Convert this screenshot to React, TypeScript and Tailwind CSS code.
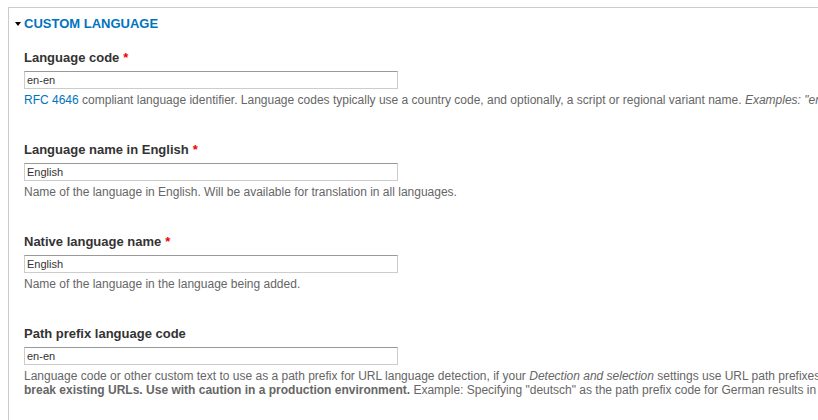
import type { ReactNode } from 'react'

interface FieldProps {
  label: string
  required?: boolean
  value: string
  children: ReactNode
}

function Field({ label, required, value, children }: FieldProps) {
  return (
    <div className="flex flex-col">
      <label className="h-[16px] text-[13px] font-bold leading-[16px] text-[#333]">
        {label}
        {required && <span className="ml-[4px] text-[#e00]">*</span>}
      </label>
      <input
        type="text"
        readOnly
        value={value}
        className="mt-[5px] h-[18px] w-[374px] border border-[#ccc] border-t-[#999] bg-white px-[2px] text-[11px] leading-[14px] text-[#333] outline-none"
      />
      <div className="mt-[4px] whitespace-nowrap text-[12px] leading-[14px] text-[#666]">{children}</div>
    </div>
  )
}

export default function App() {
  return (
    <div className="h-[420px] w-[818px] overflow-hidden bg-white font-['Liberation_Sans',Arial,sans-serif]">
      <div className="ml-[8px] mt-[7px] h-[500px] w-[1200px] border-l border-t border-[#ccc]">
        {/* Summary */}
        <div className="mt-[8px] flex h-[16px] items-center">
          <span className="ml-[6px] mr-[3px] h-0 w-0 border-x-[3.5px] border-t-[4px] border-x-transparent border-t-black" />
          <span className="text-[13px] font-bold uppercase leading-[16px] text-[#0074bd]">Custom language</span>
        </div>

        <div className="ml-[15px] mt-[18px] flex flex-col gap-[35px]">
          <Field label="Language code" required value="en-en">
            <a className="text-[#0074bd]">RFC 4646</a> compliant language identifier. Language codes typically use a
            country code, and optionally, a script or regional variant name. <em>Examples: "en", "en-US" and "zh-Hant".</em>
          </Field>
          <Field label="Language name in English" required value="English">
            Name of the language in English. Will be available for translation in all languages.
          </Field>
          <Field label="Native language name" required value="English">
            Name of the language in the language being added.
          </Field>
          <Field label="Path prefix language code" value="en-en">
            Language code or other custom text to use as a path prefix for URL language detection, if your{' '}
            <em>Detection and selection</em> settings use URL path prefixes. For the default language, this value may
            be left blank. <strong>Modifying this value will</strong>
            <br />
            <strong>break existing URLs. Use with caution in a production environment.</strong> Example: Specifying
            "deutsch" as the path prefix code for German results in URLs like "example.com/deutsch/contact".
          </Field>
        </div>
      </div>
    </div>
  )
}
